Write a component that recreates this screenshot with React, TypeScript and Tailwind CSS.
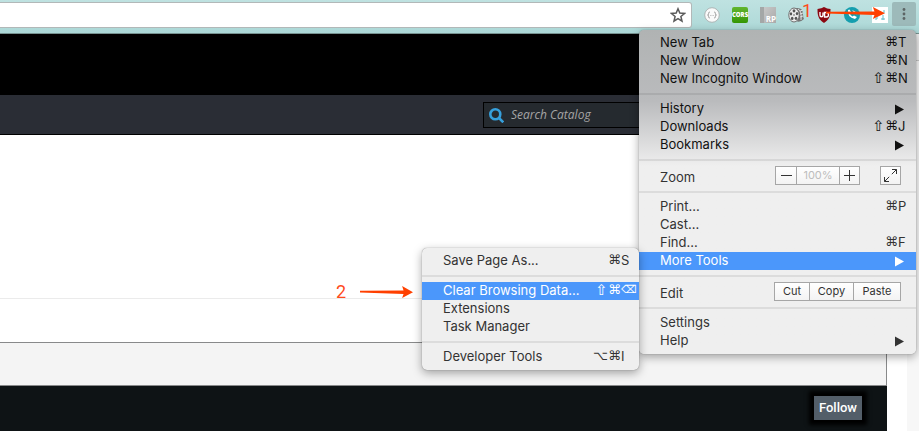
import type { ReactNode } from "react";

type Item = { label: string; mods?: string[]; keyName?: string; more?: boolean; active?: boolean };

function Triangle() {
  return (
    <svg className="mt-1 mr-3 h-[11px] w-[9px]" viewBox="0 0 9 11" fill="currentColor" aria-hidden="true">
      <path d="M0 .5 9 5.500 0 10.500z" />
    </svg>
  );
}

function MenuItem({ label, mods = [], keyName, more, active }: Item) {
  return (
    <button
      type="button"
      role="menuitem"
      className={`flex h-[18px] w-full items-start pl-[21px] text-left leading-4 ${
        active ? "bg-[#4b97fb] text-white" : ""
      }`}
    >
      <span className="flex-1 whitespace-nowrap">{label}</span>
      {more && <Triangle />}
      {keyName && (
        <span className="flex items-start">
          {mods.map((m) => (
            <span
              key={m}
              className={`min-w-[13px] text-center font-['DejaVu_Sans',sans-serif] ${
                m === "⇧" ? "text-[15px]" : "text-[13px]"
              }`}
            >
              {m}
            </span>
          ))}
          <span className={`w-[18px] ${keyName === "⌫" ? "font-['DejaVu_Sans',sans-serif] text-[11px]" : ""}`}>
            {keyName}
          </span>
        </span>
      )}
    </button>
  );
}

function Separator() {
  return <div role="separator" className="my-[5px] h-[2px] bg-black/8" />;
}

function Menu({ label, className, children }: { label: string; className: string; children: ReactNode }) {
  return (
    <div
      role="menu"
      aria-label={label}
      className={`absolute rounded-[5px] py-1 text-[13px] text-[#333333] shadow-[0_3px_10px_rgba(0,0,0,0.35),0_0_1px_rgba(0,0,0,0.5)] ${className}`}
    >
      {children}
    </div>
  );
}

const segment =
  "flex h-full items-center justify-center border-l border-[#a6a6a6] first:border-l-0 bg-linear-to-b from-white to-[#f3f3f3]";

function MainMenu() {
  return (
    <Menu
      label="Chrome menu"
      className="top-[30px] right-[3px] w-[277px] bg-linear-to-b from-[#b0b3b3] from-0% via-[#babbbd] via-22% to-[#efefef] to-42%"
    >
      <div className="text-[#111111]">
        <MenuItem label="New Tab" mods={["⌘"]} keyName="T" />
        <MenuItem label="New Window" mods={["⌘"]} keyName="N" />
        <MenuItem label="New Incognito Window" mods={["⇧", "⌘"]} keyName="N" />
        <Separator />
        <MenuItem label="History" more />
        <MenuItem label="Downloads" mods={["⇧", "⌘"]} keyName="J" />
        <MenuItem label="Bookmarks" more />
      </div>
      <Separator />
      <div className="flex h-5 items-start pr-[15px] pl-[21px]">
        <span className="flex-1 leading-[22px]">Zoom</span>
        <div className="mr-5 flex h-[19px] w-[85px] border border-[#a6a6a6]">
          <button type="button" aria-label="Zoom out" className={`${segment} w-5`}>
            <svg className="size-[11px]" viewBox="0 0 11 11" stroke="currentColor"><path d="M0 5.500h11" /></svg>
          </button>
          <span className={`${segment} flex-1 text-[11px] text-[#bdbdbd]`}>100%</span>
          <button type="button" aria-label="Zoom in" className={`${segment} w-5`}>
            <svg className="size-[11px]" viewBox="0 0 11 11" stroke="currentColor"><path d="M0 5.500h11M5.500 0v11" /></svg>
          </button>
        </div>
        <button
          type="button"
          aria-label="Full screen"
          className="flex h-[19px] w-[21px] items-center justify-center border border-[#a6a6a6] bg-linear-to-b from-white to-[#f3f3f3]"
        >
          <svg className="size-[13px]" viewBox="0 0 13 13" fill="none" stroke="currentColor">
            <path d="M8 .5h4.500v4.500M12.500 .5 7.800 5.200M.5 8v4.500H5M.5 12.500l4.700-4.700" />
          </svg>
        </button>
      </div>
      <Separator />
      <MenuItem label="Print..." mods={["⌘"]} keyName="P" />
      <MenuItem label="Cast..." />
      <MenuItem label="Find..." mods={["⌘"]} keyName="F" />
      <MenuItem label="More Tools" more active />
      <Separator />
      <div className="flex h-5 items-start pr-[15px] pl-[21px]">
        <span className="flex-1 leading-[22px]">Edit</span>
        <div className="flex h-[19px] w-[127px] border border-[#a6a6a6] text-[11px]">
          <button type="button" className={`${segment} w-[34px]`}>Cut</button>
          <button type="button" className={`${segment} w-11`}>Copy</button>
          <button type="button" className={`${segment} flex-1`}>Paste</button>
        </div>
      </div>
      <Separator />
      <MenuItem label="Settings" />
      <MenuItem label="Help" more />
    </Menu>
  );
}

function ToolsMenu() {
  return (
    <Menu label="More Tools" className="top-[248px] right-[280px] w-[217px] bg-[#efefef]">
      <MenuItem label="Save Page As..." mods={["⌘"]} keyName="S" />
      <Separator />
      <MenuItem label="Clear Browsing Data..." mods={["⇧", "⌘"]} keyName="⌫" active />
      <MenuItem label="Extensions" />
      <MenuItem label="Task Manager" />
      <Separator />
      <MenuItem label="Developer Tools" mods={["⌥", "⌘"]} keyName="I" />
    </Menu>
  );
}

function Arrow({ className }: { className: string }) {
  return (
    <svg
      className={`absolute h-3 text-[#ff4000] ${className}`}
      viewBox="0 0 56 12"
      preserveAspectRatio="none"
      fill="currentColor"
      aria-hidden="true"
    >
      <path d="M0 4.700 46 4.500 44.500 0 56 6.300 44.500 12 46 8 0 6.600z" />
    </svg>
  );
}

function Toolbar() {
  return (
    <div className="flex h-[34px] items-start border-b border-[#779391] bg-linear-to-b from-[#bfe2e1] to-[#acd8d7] pt-[2px]">
      <div className="flex h-[26px] flex-1 items-center rounded-r-[3px] border border-l-0 border-[#b2b8b8] bg-white pr-[5px]">
        <input aria-label="Address" className="min-w-0 flex-1 bg-transparent px-2 outline-none" />
        <button type="button" aria-label="Bookmark this page">
          <svg className="size-4" viewBox="0 0 16 16" fill="none" stroke="#5a5a5a" strokeWidth="1.500">
            <path d="m8 1.800 1.800 4.300 4.700.4-3.600 3 1.100 4.600L8 11.600l-4 2.500 1.100-4.600-3.600-3 4.700-.4z" />
          </svg>
        </button>
      </div>
      <div className="flex items-center gap-3 pt-[5px] pr-1 pl-3">
        <button type="button" aria-label="JSON viewer">
          <svg className="size-4" viewBox="0 0 16 16">
            <circle cx="8" cy="8" r="7.300" fill="#fafafa" stroke="#adb5b5" />
            <path d="M5.800 5q-1.300 0-1.200 1.500Q4.600 8 3.600 8q1 0 1 1.500Q4.500 11 5.800 11M10.200 5q1.300 0 1.200 1.500 0 1.500 1 1.500-1 0-1 1.500.1 1.500-1.200 1.500M6.500 8.500h.8M8.700 8.500h.8" fill="none" stroke="#999" />
          </svg>
        </button>
        <button type="button" className="flex size-4 items-center justify-center rounded-[2px] bg-linear-to-b from-[#62b52e] to-[#339600] font-['Open_Sans',sans-serif] text-[6px] font-extrabold text-white">
          CORS
        </button>
        <button type="button" className="flex size-4 items-end justify-end border-l-4 border-[#a4a7a7] bg-linear-to-br from-[#c8c8c8] to-[#aaaaaa] font-['Open_Sans',sans-serif] text-[8px] leading-[9px] font-bold text-white">
          RP
        </button>
        <button type="button" aria-label="Video downloader">
          <svg className="size-4" viewBox="0 0 16 16">
            <path d="M8 1q7-1 7 6 0 4 1 5-4 4-8 2z" fill="#777" />
            <path d="M10 2q4 2 3 11M12 4l3-1M12 7l3-1M12 10l3-1" fill="none" stroke="#e0e0e0" />
            <ellipse cx="6" cy="8" rx="5.200" ry="7" fill="#ececec" stroke="#707070" />
            <g fill="#555">
              <ellipse cx="6" cy="3.800" rx="1.400" ry="1.600" />
              <ellipse cx="3" cy="6.800" rx="1.200" ry="1.600" />
              <ellipse cx="9" cy="6.600" rx="1.200" ry="1.600" />
              <ellipse cx="4.200" cy="11.400" rx="1.300" ry="1.600" />
              <ellipse cx="8" cy="11.300" rx="1.300" ry="1.600" />
              <circle cx="6" cy="8" r=".8" />
            </g>
          </svg>
        </button>
        <button type="button" aria-label="Content blocker">
          <svg className="size-4" viewBox="0 0 16 16">
            <path d="M8 0q3 1.800 6.500 2c0 6-.5 10-6.500 14C2 12 1.500 8 1.500 2 5 1.800 8 0 8 0z" fill="#8b0711" />
            <path d="M4 5v3q0 1.800 1.500 1.800T7 8V5.500M8.500 5.500h2q2 0 2 2.200T10.400 10H8.600z" fill="none" stroke="#fff" strokeWidth="1.400" />
          </svg>
        </button>
        <button type="button" aria-label="Call extension">
          <svg className="size-4" viewBox="0 0 16 16">
            <circle cx="8" cy="8" r="8" fill="#149eae" />
            <path d="M4 3q-1 7 7 9l2-2-3-1.500-1.500 1Q6 8 5.800 6L7 5 5.500 2.500zM8 3.500q4 0 4.500 4" fill="#fff" />
          </svg>
        </button>
        <button type="button" aria-label="Translate">
          <svg className="size-4" viewBox="0 0 16 16">
            <path d="M0 0h16v16H0z" fill="#fff" />
            <path d="M3 4h4M5 4v8M3 12h2M9 12h4M11 8v5M12 3v3" stroke="#60bbca" fill="none" />
          </svg>
        </button>
      </div>
      <button type="button" aria-label="Customize and control" className="mr-[3px] flex h-6 w-6 items-center justify-center rounded-[2px] bg-[#9dbaba]">
        <svg className="h-3 w-1" viewBox="0 0 4 12" fill="#5c6464">
          <circle cx="2" cy="1.500" r="1.400" /><circle cx="2" cy="6" r="1.400" /><circle cx="2" cy="10.500" r="1.400" />
        </svg>
      </button>
    </div>
  );
}

function CatalogPage() {
  return (
    <div className="flex h-[calc(100vh-34px)]">
      <div className="min-w-0 flex-1 bg-white">
        <header>
          <div className="h-[61px] bg-black" />
          <div className="flex h-10 items-start justify-end border-b border-black bg-[#2a2d35] pt-[7px] pr-[150px]">
            <label className="flex h-[26px] w-[274px] items-center gap-[7px] border border-black bg-[#252a2f] pl-[5px]">
              <svg className="size-[15px] shrink-0" viewBox="0 0 15 15" fill="none" stroke="#36a0dc" strokeWidth="2.600" aria-hidden="true">
                <circle cx="6.300" cy="6.300" r="5" /><path d="m10 10 4.300 4.300" />
              </svg>
              <input
                aria-label="Search Catalog"
                placeholder="Search Catalog"
                className="min-w-0 flex-1 bg-transparent font-['Open_Sans',sans-serif] text-[12px] italic outline-none placeholder:text-[#a5a5a5]"
              />
            </label>
          </div>
        </header>
        <main className="pr-5">
          <div className="-mr-5 h-[164px] border-b border-[#ebebeb]" />
          <div className="h-[43px]" />
          <div className="h-11 border-y border-r border-[#88898a] bg-[#f4f4f4]" />
          <div className="flex h-[45px] items-start justify-end bg-[#0e1315] pt-[10px] pr-[25px]">
            <button type="button" className="h-6 w-12 bg-[#535e69] font-[Roboto,sans-serif] text-[13px] font-medium text-white shadow-[0_0_4px_5px_#000]">
              Follow
            </button>
          </div>
        </main>
      </div>
      <div className="w-3 bg-[#f7f7f7]">
        <div className="h-[27px] border-b border-[#c8c8c8] bg-[#ececec]" />
      </div>
    </div>
  );
}

export default function App() {
  return (
    <div className="relative h-screen overflow-hidden font-[Inter,sans-serif]">
      <Toolbar />
      <CatalogPage />
      <MainMenu />
      <ToolsMenu />
      <div className="absolute top-0 right-[107px] font-[Roboto,sans-serif] text-[18px] leading-[22px] text-[#ff4b1c]">1</div>
      <Arrow className="top-[7px] right-[34px] w-[59px]" />
      <div className="absolute top-[281px] right-[573px] font-[Roboto,sans-serif] text-[18px] leading-[22px] text-[#ff4b1c]">2</div>
      <Arrow className="top-[286px] right-[506px] w-[53px]" />
    </div>
  );
}
